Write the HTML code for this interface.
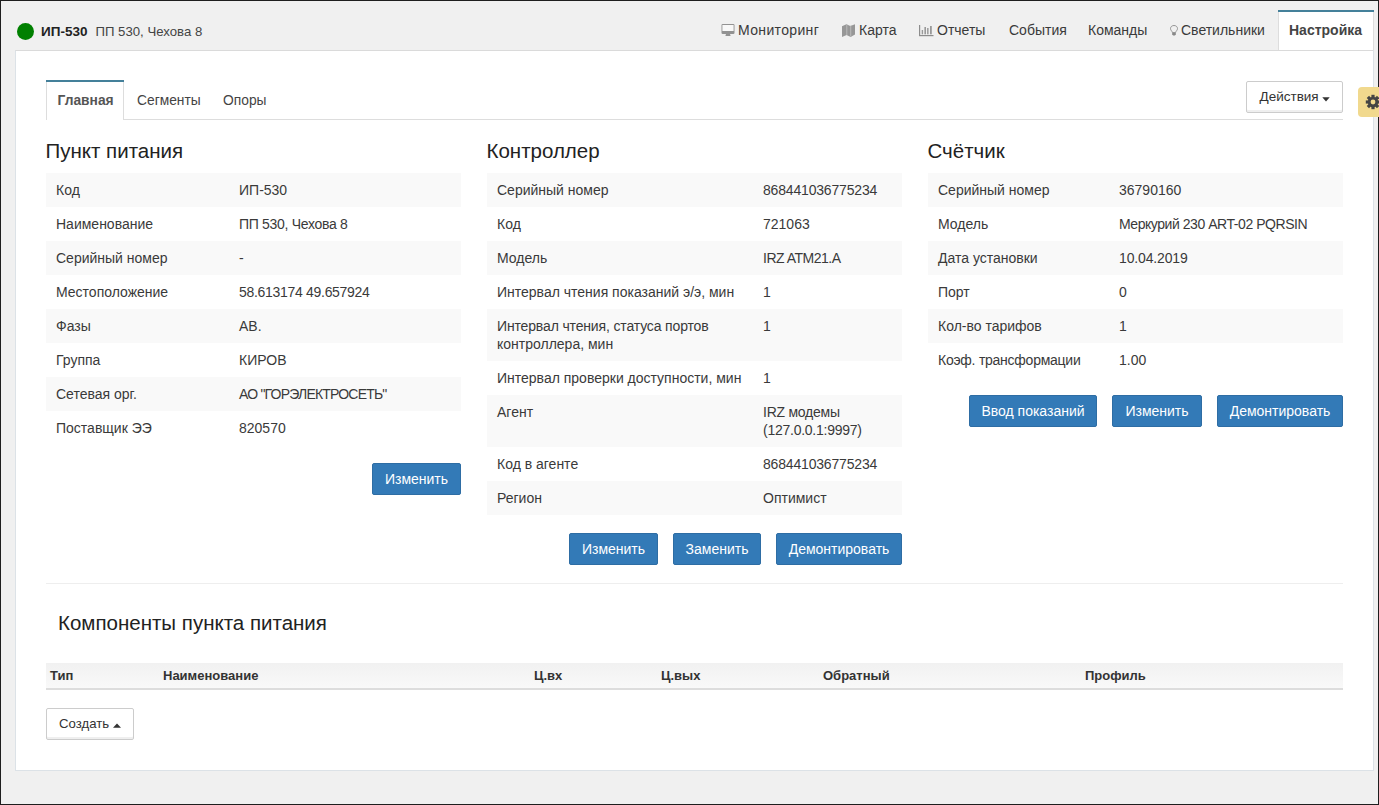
<!DOCTYPE html>
<html><head><meta charset="utf-8">
<style>
*{box-sizing:border-box;margin:0;padding:0}
html,body{width:1379px;height:805px;overflow:hidden;background:#1e1e1e}
body{font-family:"Liberation Sans",sans-serif;color:#333;font-size:14px;position:relative}
#bg{position:absolute;left:1px;top:1px;width:1377px;height:803px;background:#f0f0f0}
.abs{position:absolute;white-space:nowrap}
.dot{position:absolute;left:17px;top:23px;width:17px;height:17px;border-radius:50%;background:#008000}
.title{left:41px;top:23px;font-size:13.5px;line-height:18px;font-weight:bold;color:#222}
.subtitle{left:95.5px;top:23px;font-size:13.2px;line-height:18px;color:#444}
.nav{top:21px;font-size:14px;line-height:18px;color:#3a3a3a}
.navicon{position:absolute}
#topTab{position:absolute;left:1278px;top:10px;width:96px;height:40px;background:#fff;border-left:1px solid #ddd;border-right:1px solid #ddd;z-index:2}#topTab:before{content:"";position:absolute;left:-1px;right:-1px;top:0;height:2px;background:#44809a}
#panel{position:absolute;left:15px;top:50px;width:1359px;height:721px;background:#fff;border:1px solid #dce2e7;border-top-color:#dadada}
#tabline{position:absolute;left:46px;top:119px;width:1297px;height:1px;background:#ddd}
#tab1{position:absolute;left:46px;top:80px;width:78px;height:40px;background:#fff;border-left:1px solid #ddd;border-right:1px solid #ddd}#tab1:before{content:"";position:absolute;left:-1px;right:-1px;top:0;height:2px;background:#44809a}
.tabt{top:92px;font-size:13.8px;line-height:18px;color:#444}
.btn-def{position:absolute;background:#fff;border:1px solid #ccc;border-radius:2px;box-shadow:inset 0 -2px 0 #efefef;font-size:13.5px;color:#333;line-height:18px}
.caret{display:inline-block;width:0;height:0;border-left:3.5px solid transparent;border-right:3.5px solid transparent;border-top:4px solid #333;vertical-align:middle;margin-left:4px;position:relative;top:-1px}
.caret.up{border-top:0;border-bottom:4px solid #333}
#gear{position:absolute;left:1358px;top:87px;width:30px;height:30px;background:#f1d98e;border-radius:4px 0 0 4px;overflow:hidden;z-index:3}
h3{position:absolute;font-size:20.5px;font-weight:normal;line-height:24px;color:#222;white-space:nowrap}
table{position:absolute;border-collapse:collapse;font-size:14px;line-height:18px;color:#3a3a3a}
td{padding:8px 10px;vertical-align:top}
tr:nth-child(odd) td{background:#f9f9f9}
.btn-p{position:absolute;height:32px;background:#337ab7;border:1px solid #2e6da4;border-radius:2px;color:#fff;font-size:14px;line-height:30px;text-align:center;white-space:nowrap}
#hr{position:absolute;left:46px;top:583px;width:1297px;height:1px;background:#eee}
#thead{position:absolute;left:46px;top:663px;width:1297px;height:27px;background:linear-gradient(#f1f1f1,#f9f9f9);border-bottom:2px solid #ddd}
.th{top:667px;font-size:13px;font-weight:bold;line-height:18px;color:#333}
</style></head><body>
<div id="bg"></div>
<div class="dot"></div>
<div class="abs title">ИП-530</div>
<div class="abs subtitle">ПП 530, Чехова 8</div>

<svg class="navicon" style="left:721px;top:24px" width="14" height="13" viewBox="0 0 14 13"><rect x="1" y="0.8" width="12" height="6.5" fill="#f8f8f8"/><path d="M0.5 1.2 Q0.5 0 1.7 0 L12.3 0 Q13.5 0 13.5 1.2 L13.5 8.8 Q13.5 10 12.3 10 L1.7 10 Q0.5 10 0.5 8.8Z M1.4 1.1 L1.4 7 L12.6 7 L12.6 1.1Z" fill="#929292" fill-rule="evenodd"/><path d="M5 10 L9 10 L9.6 12 L4.4 12Z" fill="#929292"/></svg>
<div class="abs nav" style="left:738px;letter-spacing:0.35px">Мониторинг</div>
<svg class="navicon" style="left:842px;top:24px" width="13" height="13" viewBox="0 0 13 13"><path d="M0 2.2 L4.4 0.2 L8.3 2 L13 0.2 L13 10.4 L8.6 12.9 L4.6 10.9 L0 12.9Z" fill="#979797"/><path d="M4.3 0.3 L5.3 0.7 L5.3 11.2 L4.3 10.9Z" fill="#b9b9b9"/><path d="M8 1.9 L9.3 1.6 L9.3 12.4 L8 12.7Z" fill="#b3b3b3"/></svg>
<div class="abs nav" style="left:859px">Карта</div>
<svg class="navicon" style="left:919px;top:25px" width="15" height="12" viewBox="0 0 15 12"><rect x="0" y="0" width="1.2" height="11" fill="#8c8c8c"/><rect x="0" y="10" width="14.5" height="1.2" fill="#8c8c8c"/><rect x="2.7" y="5" width="1.4" height="4.3" fill="#999"/><rect x="5.4" y="2" width="1.6" height="7.3" fill="#999"/><rect x="8" y="3" width="1.6" height="6.3" fill="#a0a0a0"/><rect x="11" y="1" width="1.8" height="8.3" fill="#999"/></svg>
<div class="abs nav" style="left:937px">Отчеты</div>
<div class="abs nav" style="left:1009px">События</div>
<div class="abs nav" style="left:1088px">Команды</div>
<svg class="navicon" style="left:1170px;top:25px" width="8" height="11" viewBox="0 0 8 11"><path d="M4 0.5 C1.9 0.5 0.5 1.9 0.5 3.6 C0.5 5.3 2.1 6 2.4 7.6 L5.6 7.6 C5.9 6 7.5 5.3 7.5 3.6 C7.5 1.9 6.1 0.5 4 0.5Z" fill="none" stroke="#8a8a8a" stroke-width="0.9"/><path d="M2.2 7.8 L5.8 7.8 L5.8 9.6 L4.8 10.6 L3.2 10.6 L2.2 9.6Z" fill="#888"/></svg>
<div class="abs nav" style="left:1181px">Светильники</div>

<div id="panel"></div>
<div id="topTab"></div>
<div class="abs nav" style="left:1289px;font-weight:bold;color:#444;z-index:3">Настройка</div>

<div id="tabline"></div>
<div id="tab1"></div>
<div class="abs tabt" style="left:57.5px;font-weight:bold;color:#555">Главная</div>
<div class="abs tabt" style="left:137px">Сегменты</div>
<div class="abs tabt" style="left:223px">Опоры</div>

<div class="btn-def" style="left:1246px;top:81px;width:97px;height:32px;padding:6px 0 0 12.5px">Действия</div><svg style="position:absolute;left:1322px;top:97px" width="8" height="5" viewBox="0 0 8 5"><path d="M0.3 0.3 L7.7 0.3 L4 4.6Z" fill="#333"/></svg>
<div id="gear"><svg style="position:absolute;left:0;top:0" width="30" height="30" viewBox="0 0 30 30"><g transform="translate(15,15)" fill="#444"><circle r="5.2"/><g id="tooth"><rect x="-1.6" y="-7.2" width="3.2" height="3"/></g><use href="#tooth" transform="rotate(45)"/><use href="#tooth" transform="rotate(90)"/><use href="#tooth" transform="rotate(135)"/><use href="#tooth" transform="rotate(180)"/><use href="#tooth" transform="rotate(225)"/><use href="#tooth" transform="rotate(270)"/><use href="#tooth" transform="rotate(315)"/><circle r="2.4" fill="#f1d98e"/></g></svg></div>

<h3 style="left:45.5px;top:139px">Пункт питания</h3>
<table style="left:46px;top:173px;width:415px">
<tr><td style="width:183px">Код</td><td>ИП-530</td></tr>
<tr><td>Наименование</td><td style="letter-spacing:-0.3px">ПП 530, Чехова 8</td></tr>
<tr><td>Серийный номер</td><td>-</td></tr>
<tr><td>Местоположение</td><td style="letter-spacing:-0.3px">58.613174 49.657924</td></tr>
<tr><td>Фазы</td><td>AB.</td></tr>
<tr><td>Группа</td><td>КИРОВ</td></tr>
<tr><td>Сетевая орг.</td><td style="letter-spacing:-0.8px">АО "ГОРЭЛЕКТРОСЕТЬ"</td></tr>
<tr><td>Поставщик ЭЭ</td><td>820570</td></tr>
</table>
<div class="btn-p" style="left:372px;top:463px;width:89px">Изменить</div>

<h3 style="left:486.5px;top:139px">Контроллер</h3>
<table style="left:487px;top:173px;width:415px">
<tr><td style="width:266px">Серийный номер</td><td style="letter-spacing:-0.18px">868441036775234</td></tr>
<tr><td>Код</td><td>721063</td></tr>
<tr><td>Модель</td><td style="letter-spacing:-0.5px">IRZ ATM21.A</td></tr>
<tr><td>Интервал чтения показаний э/э, мин</td><td>1</td></tr>
<tr><td><span style="letter-spacing:-0.15px">Интервал чтения, статуса портов</span><br>контроллера, мин</td><td>1</td></tr>
<tr><td>Интервал проверки доступности, мин</td><td>1</td></tr>
<tr><td>Агент</td><td style="letter-spacing:-0.25px">IRZ модемы<br>(127.0.0.1:9997)</td></tr>
<tr><td>Код в агенте</td><td style="letter-spacing:-0.18px">868441036775234</td></tr>
<tr><td>Регион</td><td>Оптимист</td></tr>
</table>
<div class="btn-p" style="left:569px;top:533px;width:89px">Изменить</div>
<div class="btn-p" style="left:673px;top:533px;width:88px">Заменить</div>
<div class="btn-p" style="left:776px;top:533px;width:126px">Демонтировать</div>

<h3 style="left:927.5px;top:139px">Счётчик</h3>
<table style="left:928px;top:173px;width:415px">
<tr><td style="width:181px">Серийный номер</td><td>36790160</td></tr>
<tr><td>Модель</td><td style="letter-spacing:-0.45px">Меркурий 230 ART-02 PQRSIN</td></tr>
<tr><td>Дата установки</td><td style="letter-spacing:-0.15px">10.04.2019</td></tr>
<tr><td>Порт</td><td>0</td></tr>
<tr><td>Кол-во тарифов</td><td>1</td></tr>
<tr><td style="letter-spacing:-0.25px">Коэф. трансформации</td><td>1.00</td></tr>
</table>
<div class="btn-p" style="left:969px;top:395px;width:128px">Ввод показаний</div>
<div class="btn-p" style="left:1112px;top:395px;width:90px">Изменить</div>
<div class="btn-p" style="left:1217px;top:395px;width:126px">Демонтировать</div>

<div id="hr"></div>
<h3 style="left:58px;top:611px">Компоненты пункта питания</h3>
<div id="thead"></div>
<div class="abs th" style="left:50px">Тип</div>
<div class="abs th" style="left:163px">Наименование</div>
<div class="abs th" style="left:534px">Ц.вх</div>
<div class="abs th" style="left:661px">Ц.вых</div>
<div class="abs th" style="left:823px">Обратный</div>
<div class="abs th" style="left:1085px">Профиль</div>
<div class="btn-def" style="left:46px;top:708px;width:88px;height:32px;padding:6px 0 0 12px;font-size:13.2px">Создать</div><svg style="position:absolute;left:113px;top:723px" width="8" height="5" viewBox="0 0 8 5"><path d="M0 4.8 L8 4.8 L4 0.6Z" fill="#333"/></svg>
</body></html>
